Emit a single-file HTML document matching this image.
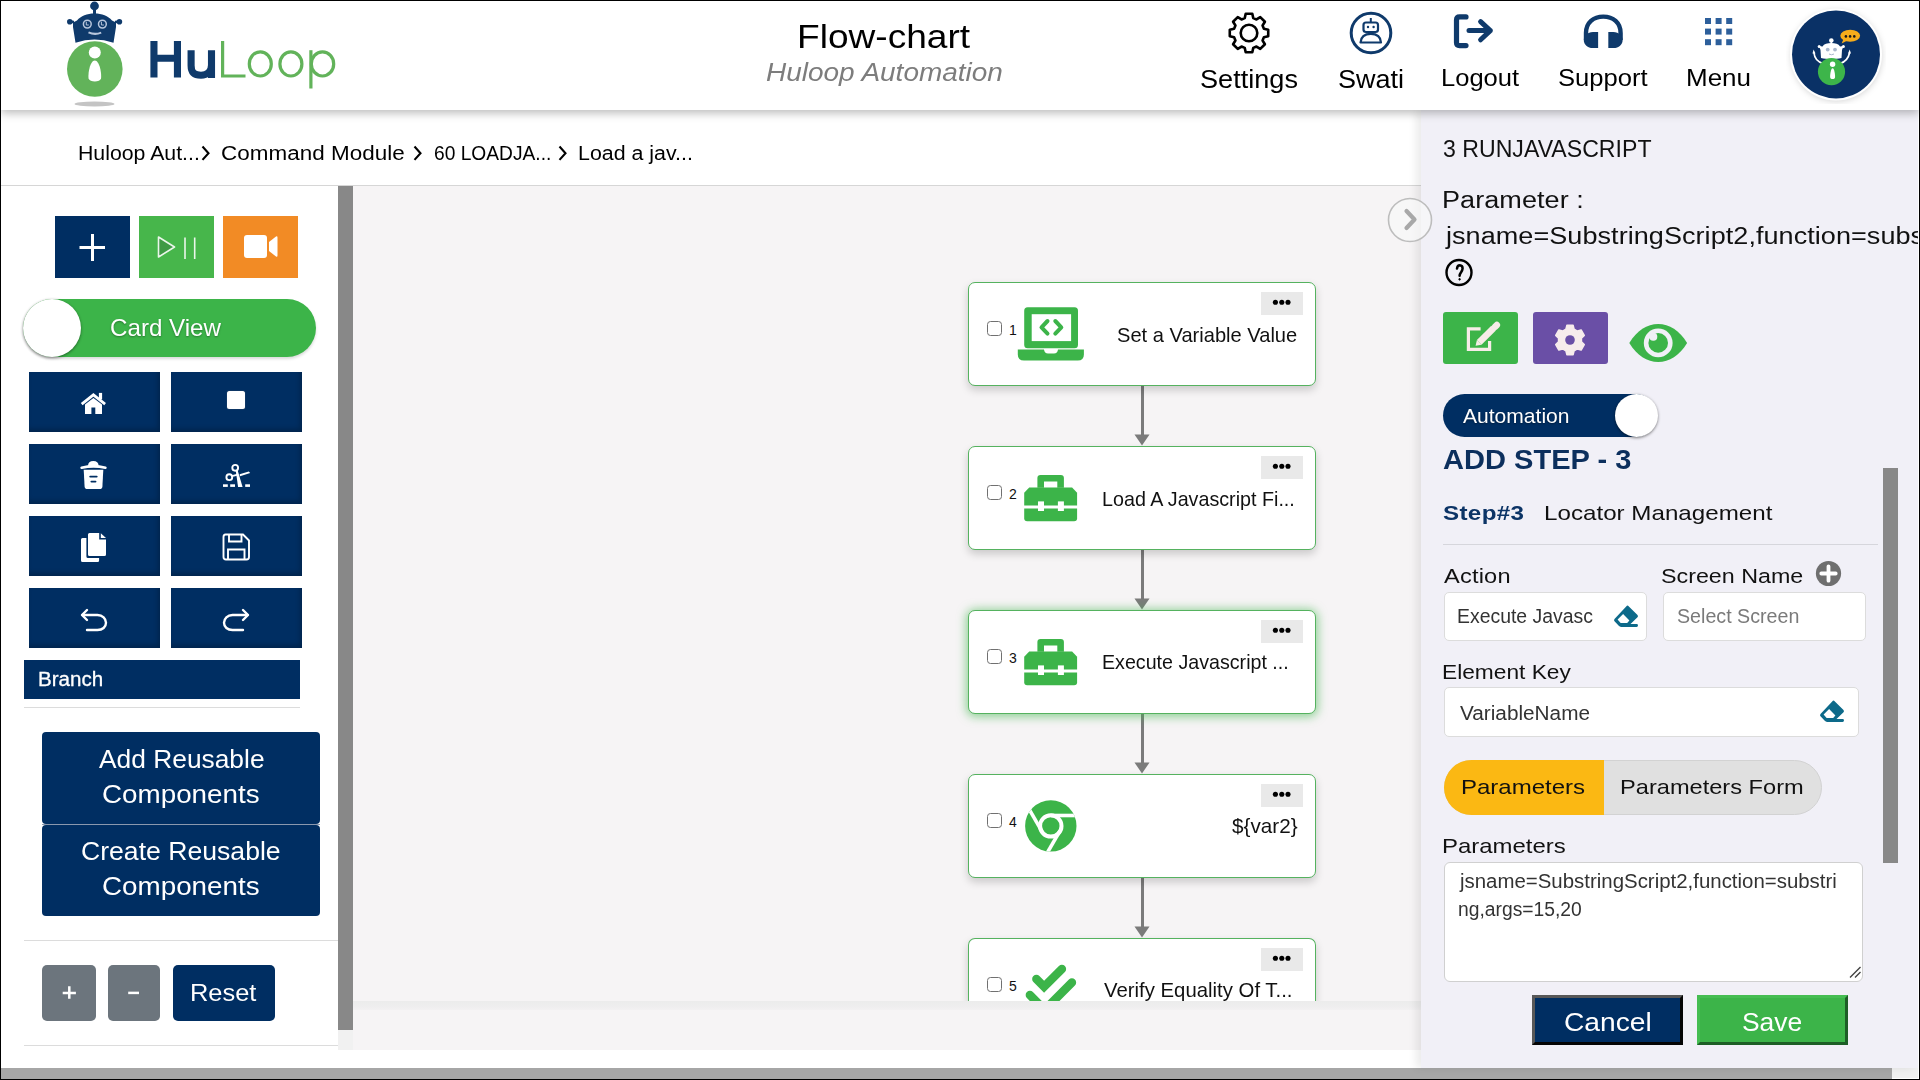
<!DOCTYPE html><html><head><meta charset="utf-8"><style>
html,body{margin:0;padding:0;}
body{width:1920px;height:1080px;overflow:hidden;background:#000;position:relative;font-family:"Liberation Sans",sans-serif;}
.t{position:absolute;line-height:1;white-space:nowrap;}
svg{display:block;}
</style></head><body>
<div style="position:absolute;left:1px;top:1px;width:1918px;height:1078px;background:#fff;"></div>
<div style="position:absolute;left:353px;top:186px;width:1068px;height:815px;background:#f6f4f5;"></div>
<div style="position:absolute;left:353px;top:1001px;width:1068px;height:10px;background:linear-gradient(#ececec, #efeeef 60%, #f4f2f3);"></div>
<div style="position:absolute;left:353px;top:1010px;width:1068px;height:40px;background:#f6f4f5;"></div>
<div style="position:absolute;left:338px;top:186px;width:15px;height:844px;background:#888;"></div>
<div style="position:absolute;left:338px;top:1030px;width:15px;height:20px;background:#f1f1f1;"></div>
<div style="position:absolute;left:1px;top:1068px;width:1891px;height:11px;background:#a6a6a6;"></div>
<div style="position:absolute;left:1892px;top:1068px;width:26px;height:10px;background:#f0f0f0;"></div>
<div style="position:absolute;left:1px;top:185px;width:1420px;height:1px;background:#d6d6d6;"></div>
<div style="position:absolute;left:1px;top:1px;width:1918px;height:109px;background:#fff;box-shadow:0 3px 9px rgba(0,0,0,0.28);z-index:5;"></div>
<div style="position:absolute;left:1421px;top:110px;width:497px;height:958px;background:#f1f0f7;box-shadow:-5px 0 8px rgba(0,0,0,0.08);z-index:2;"></div>
<svg style="position:absolute;left:60px;top:0px;z-index:7;" width="290" height="110" viewBox="0 0 290 110">
<ellipse cx="34.5" cy="104" rx="20" ry="2.4" fill="#c4c4c4"/>
<circle cx="34.8" cy="69" r="27.8" fill="#62b35a"/>
<circle cx="34.8" cy="52.5" r="6" fill="#fff"/>
<path d="M34.8 60.5 C30 60.5 27.8 74 28.6 78.5 C29.5 82.5 40.2 82.5 41 78.5 C41.8 74 39.6 60.5 34.8 60.5Z" fill="#fff"/>
<circle cx="34.5" cy="6" r="4.4" fill="#0f3a6b"/>
<rect x="33" y="8" width="3" height="7" fill="#0f3a6b"/>
<path d="M13 27 L13 22.5 L17 20.5 C21 15.5 27 13.4 34.5 13.4 C42 13.4 48 15.5 52 20.5 L56 22.5 L56 27 L53.5 42.8 Q34.5 36 15.5 42.8 Z" fill="#0f3a6b"/>
<circle cx="9.8" cy="21.8" r="2.8" fill="#0f3a6b"/><circle cx="59.4" cy="21.8" r="2.8" fill="#0f3a6b"/>
<path d="M9.8 21.8 L14 22 M59.4 21.8 L55 22" stroke="#0f3a6b" stroke-width="2.5"/>
<circle cx="27.3" cy="24.1" r="3.9" fill="none" stroke="#b8c6dc" stroke-width="1.5"/>
<circle cx="42.4" cy="24.1" r="3.9" fill="none" stroke="#b8c6dc" stroke-width="1.5"/>
<path d="M26.3 21.8 V25 H28.8 M41.4 21.8 V25 H43.9" stroke="#b8c6dc" stroke-width="1" fill="none"/>
<path d="M28.5 32.3 Q34.8 35.3 41.2 32.6" stroke="#b8c6dc" stroke-width="2" fill="none"/>
</svg>
<svg style="position:absolute;left:140px;top:30px;z-index:7;" width="210" height="70" viewBox="0 0 210 70">
<g fill="none" stroke="#0f3a6b" stroke-width="7.1">
<path d="M13.95 11 V47.6 M37.45 11 V47.6 M13.95 28.2 H37.45"/>
<path d="M51.1 20.2 V35.5 C51.1 43.5 55 45.2 61 45.2 C67 45.2 71.5 42 71.5 35 V20.2 M71.5 30 V48.1"/>
</g>
<g fill="none" stroke="#62b35a" stroke-width="3.2">
<path d="M82.6 11 V46 H105.5"/>
<ellipse cx="120.3" cy="33.9" rx="11" ry="12.1"/>
<ellipse cx="150.9" cy="33.9" rx="11" ry="12.1"/>
<ellipse cx="182.5" cy="33.9" rx="11.2" ry="12.1"/>
<path d="M170.9 20.2 V58.5"/>
</g>
</svg>
<div class="t" style="left:797.2284768211921px;top:20.00px;font-size:33px;color:#000;font-weight:normal;letter-spacing:0.0px;font-style:normal;transform:scaleX(1.1238);transform-origin:0 0;z-index:7;">Flow-chart</div>
<div class="t" style="left:765.8809523809524px;top:60.00px;font-size:25px;color:#7d7d7d;font-weight:normal;letter-spacing:0.0px;font-style:italic;transform:scaleX(1.1190);transform-origin:0 0;z-index:7;">Huloop Automation</div>
<svg style="position:absolute;left:1228px;top:12px;z-index:7;" width="42" height="42" viewBox="0 0 42 42"><path d="M16.72 6.10 L17.70 1.78 L24.30 1.78 L25.28 6.10 L28.50 7.44 L32.26 5.08 L36.92 9.74 L34.56 13.50 L35.90 16.72 L40.22 17.70 L40.22 24.30 L35.90 25.28 L34.56 28.50 L36.92 32.26 L32.26 36.92 L28.50 34.56 L25.28 35.90 L24.30 40.22 L17.70 40.22 L16.72 35.90 L13.50 34.56 L9.74 36.92 L5.08 32.26 L7.44 28.50 L6.10 25.28 L1.78 24.30 L1.78 17.70 L6.10 16.72 L7.44 13.50 L5.08 9.74 L9.74 5.08 L13.50 7.44Z" fill="none" stroke="#000" stroke-width="2.6" stroke-linejoin="round"/><circle cx="21" cy="21" r="8.3" fill="none" stroke="#000" stroke-width="2.6"/></svg>
<div class="t" style="left:1200.4157303370787px;top:67.00px;font-size:25px;color:#000;font-weight:normal;letter-spacing:-0.0px;font-style:normal;transform:scaleX(1.0843);transform-origin:0 0;z-index:7;">Settings</div>
<svg style="position:absolute;left:1349px;top:11px;z-index:7;" width="44" height="44" viewBox="0 0 44 44"><circle cx="22" cy="22" r="19.8" fill="none" stroke="#0f3a6b" stroke-width="3"/>
<rect x="14.5" y="11.5" width="14.5" height="9.5" rx="2.5" fill="none" stroke="#0f3a6b" stroke-width="2.2"/>
<path d="M21.8 7 V11" stroke="#0f3a6b" stroke-width="2"/>
<circle cx="19" cy="16" r="1.2" fill="#0f3a6b"/><circle cx="24.6" cy="16" r="1.2" fill="#0f3a6b"/>
<path d="M11.5 31.5 C12 24.5 17 22.8 21.8 22.8 C26.6 22.8 31.6 24.5 32 31.5 Z" fill="none" stroke="#0f3a6b" stroke-width="2.2" stroke-linejoin="round"/>
</svg>
<div class="t" style="left:1337.6694915254238px;top:67.00px;font-size:25px;color:#000;font-weight:normal;letter-spacing:0.0px;font-style:normal;transform:scaleX(1.0805);transform-origin:0 0;z-index:7;">Swati</div>
<svg style="position:absolute;left:1452px;top:13px;z-index:7;" width="44" height="37" viewBox="0 0 44 37"><path d="M14 3.9 H7.6 Q4.5 3.9 4.5 7 V29.5 Q4.5 32.6 7.6 32.6 H14" fill="none" stroke="#0f3a6b" stroke-width="5.2" stroke-linecap="round" stroke-linejoin="round"/>
<path d="M17 17.6 H38.3 M28.6 8.6 L38.3 17.6 L28.6 26.8" fill="none" stroke="#0f3a6b" stroke-width="5" stroke-linecap="round" stroke-linejoin="round"/></svg>
<div class="t" style="left:1441.2794117647059px;top:67.00px;font-size:23px;color:#000;font-weight:normal;letter-spacing:0.0px;font-style:normal;transform:scaleX(1.1103);transform-origin:0 0;z-index:7;">Logout</div>
<svg style="position:absolute;left:1582px;top:13px;z-index:7;" width="42" height="37" viewBox="0 0 42 37"><path d="M4 27 V20 C4 9.5 11.5 3.6 21.3 3.6 C31.1 3.6 38.6 9.5 38.6 20 V27" fill="none" stroke="#0f3a6b" stroke-width="4.4"/>
<path d="M16.1 18.9 H11 C5.5 18.9 1.8 22.5 1.8 27 C1.8 31.5 5.5 35.1 11 35.1 H16.1Z" fill="#0f3a6b"/>
<path d="M26.3 18.9 H31.4 C36.9 18.9 40.6 22.5 40.6 27 C40.6 31.5 36.9 35.1 31.4 35.1 H26.3Z" fill="#0f3a6b"/></svg>
<div class="t" style="left:1557.8875px;top:67.00px;font-size:23px;color:#000;font-weight:normal;letter-spacing:0.0px;font-style:normal;transform:scaleX(1.1125);transform-origin:0 0;z-index:7;">Support</div>
<svg style="position:absolute;left:1705px;top:18px;z-index:7;" width="28" height="28" viewBox="0 0 28 28"><rect x="0.0" y="0.0" width="6" height="6" fill="#2d5f9b"/><rect x="10.6" y="0.0" width="6" height="6" fill="#2d5f9b"/><rect x="21.2" y="0.0" width="6" height="6" fill="#2d5f9b"/><rect x="0.0" y="10.6" width="6" height="6" fill="#2d5f9b"/><rect x="10.6" y="10.6" width="6" height="6" fill="#2d5f9b"/><rect x="21.2" y="10.6" width="6" height="6" fill="#2d5f9b"/><rect x="0.0" y="21.2" width="6" height="6" fill="#2d5f9b"/><rect x="10.6" y="21.2" width="6" height="6" fill="#2d5f9b"/><rect x="21.2" y="21.2" width="6" height="6" fill="#2d5f9b"/></svg>
<div class="t" style="left:1686.2407407407406px;top:67.00px;font-size:23px;color:#000;font-weight:normal;letter-spacing:0.0px;font-style:normal;transform:scaleX(1.1296);transform-origin:0 0;z-index:7;">Menu</div>
<svg style="position:absolute;left:1786px;top:4px;z-index:7;" width="100" height="100" viewBox="0 0 100 100">
<defs><filter id="sh" x="-30%" y="-30%" width="160%" height="160%"><feGaussianBlur stdDeviation="3"/></filter></defs>
<circle cx="50.5" cy="52" r="45.5" fill="rgba(0,0,0,0.16)" filter="url(#sh)"/>
<circle cx="50" cy="50.4" r="46" fill="#fff"/>
<circle cx="50" cy="50.4" r="44" fill="#0a3166"/>
<ellipse cx="64.2" cy="31.75" rx="9.9" ry="5.9" fill="#f6ad1b"/>
<path d="M57.5 35 L55.6 39.6 L61.5 36.5Z" fill="#f6ad1b"/>
<circle cx="59.9" cy="32.4" r="1.3" fill="#1a1a1a"/><circle cx="64.1" cy="32.4" r="1.3" fill="#1a1a1a"/><circle cx="68.3" cy="32.4" r="1.3" fill="#1a1a1a"/>
<circle cx="45.3" cy="36.5" r="2.3" fill="#fff"/><rect x="44.6" y="37" width="1.4" height="3" fill="#fff"/>
<path d="M36.5 42.5 C38 39.8 41.5 39 45.3 39 C49.1 39 52.6 39.8 54.1 42.5 L57.5 42 L56 46 L55.5 54 C50 55.5 40.5 55.5 35 54 L34.5 46 L33 42Z" fill="#fff"/>
<circle cx="33.2" cy="42.6" r="1.5" fill="#fff"/><circle cx="57.4" cy="42.6" r="1.5" fill="#fff"/>
<circle cx="41.7" cy="45.6" r="1.9" fill="#a9b7cc"/><circle cx="49" cy="45.6" r="1.9" fill="#a9b7cc"/>
<path d="M43 50 Q45.5 51.5 48 50" stroke="#a9b7cc" stroke-width="1" fill="none"/>
<path d="M37 59.5 C32 58 28.5 54 28 49 M54 59.5 C59 58 62.5 54 63.5 49" fill="none" stroke="#fff" stroke-width="1.7"/>
<path d="M26.5 49.5 L27.6 45.5 L29.5 49.5Z M62 49.5 L63.7 45.5 L65 49.5Z" fill="#fff"/>
<circle cx="45.5" cy="67.7" r="13.6" fill="#3db54a"/>
<circle cx="46.6" cy="60.3" r="2.7" fill="#fff"/>
<path d="M46.6 64.2 C44.8 64.2 43.9 71 44.2 73.5 C44.5 75.6 48.7 75.6 49 73.5 C49.3 71 48.4 64.2 46.6 64.2Z" fill="#fff"/>
</svg>
<div class="t" style="left:78.41851851851851px;top:144.00px;font-size:19.5px;color:#000;font-weight:normal;letter-spacing:-0.0px;font-style:normal;transform:scaleX(1.0907);transform-origin:0 0;">Huloop Aut...</div>
<svg style="position:absolute;left:201px;top:145px;" width="10" height="17" viewBox="0 0 10 17"><path d="M1.5 1.5 L7.5 8.2 L1.5 14.9" fill="none" stroke="#000" stroke-width="2.1" stroke-linejoin="miter"/></svg>
<div class="t" style="left:221.45px;top:144.00px;font-size:19.5px;color:#000;font-weight:normal;letter-spacing:0.027px;font-style:normal;transform:scaleX(1.1500);transform-origin:0 0;">Command Module</div>
<svg style="position:absolute;left:412.5px;top:145px;" width="10" height="17" viewBox="0 0 10 17"><path d="M1.5 1.5 L7.5 8.2 L1.5 14.9" fill="none" stroke="#000" stroke-width="2.1" stroke-linejoin="miter"/></svg>
<div class="t" style="left:433.5162393162393px;top:144.00px;font-size:19.5px;color:#000;font-weight:normal;letter-spacing:0.0px;font-style:normal;transform:scaleX(0.9838);transform-origin:0 0;">60 LOADJA...</div>
<svg style="position:absolute;left:557.5px;top:145px;" width="10" height="17" viewBox="0 0 10 17"><path d="M1.5 1.5 L7.5 8.2 L1.5 14.9" fill="none" stroke="#000" stroke-width="2.1" stroke-linejoin="miter"/></svg>
<div class="t" style="left:577.5079207920793px;top:144.00px;font-size:19.5px;color:#000;font-weight:normal;letter-spacing:0.0px;font-style:normal;transform:scaleX(1.0960);transform-origin:0 0;">Load a jav...</div>
<div style="position:absolute;left:55px;top:216px;width:75px;height:62px;background:#002e62;"></div>
<svg style="position:absolute;left:55px;top:216px;" width="75" height="62" viewBox="0 0 75 62"><path d="M37.5 18 V45 M24.5 31.5 H50" stroke="#fff" stroke-width="3"/></svg>
<div style="position:absolute;left:139px;top:216px;width:75px;height:62px;background:#47b64b;"></div>
<svg style="position:absolute;left:139px;top:216px;" width="75" height="62" viewBox="0 0 75 62"><path d="M19.5 21 L35.5 31 L19.5 41Z" fill="#3f9a45" stroke="#eaf6ea" stroke-width="1.6" stroke-linejoin="round"/><path d="M46 21.5 V43 M55.7 21.5 V43" stroke="#eaf6ea" stroke-width="1.6"/></svg>
<div style="position:absolute;left:223px;top:216px;width:75px;height:62px;background:#f28b25;"></div>
<svg style="position:absolute;left:223px;top:216px;" width="75" height="62" viewBox="0 0 75 62"><rect x="21" y="19" width="23" height="23" rx="3" fill="#fff"/><path d="M46 26 L53 20.5 Q54.5 19.8 54.5 21.5 V39.5 Q54.5 41.2 53 40.5 L46 35Z" fill="#fff"/></svg>
<div style="position:absolute;left:22.5px;top:299px;width:293px;height:58px;background:#3cb449;border-radius:29px;box-shadow:0 2px 3px rgba(0,0,0,0.15);"></div>
<div style="position:absolute;left:22.5px;top:299px;width:58px;height:58px;background:#fff;border-radius:50%;box-shadow:0 1px 3px rgba(0,0,0,0.45);"></div>
<div class="t" style="left:110.19357798165137px;top:316.00px;font-size:24px;color:#fff;font-weight:normal;letter-spacing:0.0px;font-style:normal;transform:scaleX(1.0064);transform-origin:0 0;text-shadow:0 1px 2px rgba(0,0,0,0.35);">Card View</div>
<div style="position:absolute;left:29px;top:372px;width:131px;height:60px;background:#002e62;box-shadow:inset -2px -3px 5px rgba(0,0,0,0.22);"></div>
<div style="position:absolute;left:171px;top:372px;width:131px;height:60px;background:#002e62;box-shadow:inset -2px -3px 5px rgba(0,0,0,0.22);"></div>
<div style="position:absolute;left:29px;top:444px;width:131px;height:60px;background:#002e62;box-shadow:inset -2px -3px 5px rgba(0,0,0,0.22);"></div>
<div style="position:absolute;left:171px;top:444px;width:131px;height:60px;background:#002e62;box-shadow:inset -2px -3px 5px rgba(0,0,0,0.22);"></div>
<div style="position:absolute;left:29px;top:516px;width:131px;height:60px;background:#002e62;box-shadow:inset -2px -3px 5px rgba(0,0,0,0.22);"></div>
<div style="position:absolute;left:171px;top:516px;width:131px;height:60px;background:#002e62;box-shadow:inset -2px -3px 5px rgba(0,0,0,0.22);"></div>
<div style="position:absolute;left:29px;top:588px;width:131px;height:60px;background:#002e62;box-shadow:inset -2px -3px 5px rgba(0,0,0,0.22);"></div>
<div style="position:absolute;left:171px;top:588px;width:131px;height:60px;background:#002e62;box-shadow:inset -2px -3px 5px rgba(0,0,0,0.22);"></div>
<svg style="position:absolute;left:80px;top:391px;" width="27" height="25" viewBox="0 0 27 25"><path d="M1.7 13.1 L13.4 3.9 L25.1 13.1" fill="none" stroke="#fff" stroke-width="2.8" stroke-linejoin="miter" stroke-miterlimit="10"/><path d="M5 13.6 L13.4 7 L22 13.6 V23 H15.3 V16.4 H11.4 V23 H5Z" fill="#fff"/><rect x="18.9" y="1.9" width="3.2" height="6.5" fill="#fff"/></svg>
<div style="position:absolute;left:227px;top:391px;width:18px;height:17.5px;background:#fff;border-radius:2.5px;box-shadow:0 0 1px #888;"></div>
<svg style="position:absolute;left:80px;top:460px;" width="27" height="30" viewBox="0 0 27 30"><path d="M7.9 6 Q8.2 0.9 13.3 0.9 Q18.4 0.9 18.7 6Z" fill="#fff"/><path d="M1.6 7.8 Q13.5 5 25.4 7.8" fill="none" stroke="#fff" stroke-width="2.6" stroke-linecap="round"/><path d="M3.7 9.8 H23.3 L22.4 26.4 Q22.2 29.1 19.5 29.1 H7.5 Q4.8 29.1 4.6 26.4Z" fill="#fff"/><path d="M10.2 16.6 H16.7 M11.4 21.6 H15.5" stroke="#002e62" stroke-width="1.9" stroke-linecap="round"/></svg>
<svg style="position:absolute;left:222px;top:463px;" width="30" height="26" viewBox="0 0 30 26"><circle cx="13.2" cy="4.8" r="2.9" fill="none" stroke="#fff" stroke-width="1.9"/><circle cx="7.3" cy="14.2" r="2.9" fill="none" stroke="#fff" stroke-width="1.9"/><path d="M13.7 7.4 L15.7 7.4 L20.6 23.9 L16.1 23.9Z" fill="#fff"/><path d="M9.9 13.2 L15.8 11.6" stroke="#fff" stroke-width="1.8"/><path d="M17.6 11.2 L26.8 8.5 L28.2 9.9 L18 13.3Z" fill="#fff"/><rect x="1" y="21.3" width="4.8" height="2.6" fill="#fff"/><rect x="8.2" y="21.3" width="4.8" height="2.6" fill="#fff"/><rect x="23.2" y="21.3" width="4.8" height="2.6" fill="#fff"/></svg>
<svg style="position:absolute;left:80px;top:532px;" width="27" height="31" viewBox="0 0 27 31"><path d="M8 2.6 Q8 1.1 9.5 1.1 H19.2 V7.5 H26 V22.5 Q26 24 24.5 24 H9.5 Q8 24 8 22.5Z" fill="#fff"/><path d="M20.8 1.2 L26 6 H20.8Z" fill="#fff"/><path d="M1 7.6 Q1 6.1 2.5 6.1 H6.4 V24.4 Q6.4 25.9 7.9 25.9 H19.1 V28.4 Q19.1 29.9 17.6 29.9 H2.5 Q1 29.9 1 28.4Z" fill="#fff"/></svg>
<svg style="position:absolute;left:222px;top:533px;" width="29" height="28" viewBox="0 0 29 28"><path d="M3.5 1.5 H21 L27 7.5 V24 Q27 26.5 24.5 26.5 H4 Q1.5 26.5 1.5 24 V4 Q1.5 1.5 3.5 1.5Z" fill="none" stroke="#fff" stroke-width="1.9"/><path d="M7 1.8 V8.5 H19.5 V1.8" fill="none" stroke="#fff" stroke-width="1.9"/><path d="M6 26 V16.5 H22.5 V26" fill="none" stroke="#fff" stroke-width="1.9"/></svg>
<svg style="position:absolute;left:80px;top:607px;" width="28" height="25" viewBox="0 0 28 25"><path d="M7 3 L2 8 L7 13" fill="none" stroke="#fff" stroke-width="2.4" stroke-linecap="round" stroke-linejoin="round"/><path d="M2.5 8 H17.5 C22.5 8 26 11.5 26 15.8 C26 20 22.5 23 17.5 23 H7" fill="none" stroke="#fff" stroke-width="2.4" stroke-linecap="round"/></svg>
<svg style="position:absolute;left:222px;top:607px;" width="28" height="25" viewBox="0 0 28 25"><path d="M21 3 L26 8 L21 13" fill="none" stroke="#fff" stroke-width="2.4" stroke-linecap="round" stroke-linejoin="round"/><path d="M25.5 8 H10.5 C5.5 8 2 11.5 2 15.8 C2 20 5.5 23 10.5 23 H21" fill="none" stroke="#fff" stroke-width="2.4" stroke-linecap="round"/></svg>
<div style="position:absolute;left:24px;top:660px;width:276px;height:39px;background:#002e62;"></div>
<div class="t" style="left:37.791525423728814px;top:670.00px;font-size:19.5px;color:#fff;font-weight:normal;letter-spacing:0.0px;font-style:normal;transform:scaleX(1.0542);transform-origin:0 0;-webkit-text-stroke:0.3px #fff;">Branch</div>
<div style="position:absolute;left:24px;top:707px;width:276px;height:1px;background:#dcdcdc;"></div>
<div style="position:absolute;left:42px;top:732px;width:278px;height:91.5px;background:#002e62;border-radius:4px;"></div>
<div style="position:absolute;left:42px;top:823.5px;width:278px;height:1.5px;background:#8a98ae;"></div>
<div style="position:absolute;left:42px;top:825px;width:278px;height:90.5px;background:#002e62;border-radius:4px;"></div>
<div class="t" style="left:99.0px;top:747.00px;font-size:25.5px;color:#fff;font-weight:normal;letter-spacing:0.0px;font-style:normal;transform:scaleX(1.0333);transform-origin:0 0;">Add Reusable</div>
<div class="t" style="left:101.70979020979021px;top:782.00px;font-size:25.5px;color:#fff;font-weight:normal;letter-spacing:0.0px;font-style:normal;transform:scaleX(1.0902);transform-origin:0 0;">Components</div>
<div class="t" style="left:80.85684210526317px;top:839.00px;font-size:25.5px;color:#fff;font-weight:normal;letter-spacing:0.0px;font-style:normal;transform:scaleX(1.0432);transform-origin:0 0;">Create Reusable</div>
<div class="t" style="left:101.70979020979021px;top:874.00px;font-size:25.5px;color:#fff;font-weight:normal;letter-spacing:0.0px;font-style:normal;transform:scaleX(1.0902);transform-origin:0 0;">Components</div>
<div style="position:absolute;left:24px;top:940px;width:314px;height:1px;background:#dcdcdc;"></div>
<div style="position:absolute;left:42px;top:965px;width:54px;height:56px;background:#6c757d;border-radius:5px;"></div>
<div style="position:absolute;left:108px;top:965px;width:52px;height:56px;background:#6c757d;border-radius:5px;"></div>
<div style="position:absolute;left:172.5px;top:965px;width:102px;height:56px;background:#002e62;border-radius:5px;"></div>
<svg style="position:absolute;left:42px;top:965px;" width="54" height="56" viewBox="0 0 54 56"><path d="M27.3 21.3 V33.8 M20.7 27.9 H33.9" stroke="#fff" stroke-width="2.5"/></svg>
<svg style="position:absolute;left:108px;top:965px;" width="52" height="56" viewBox="0 0 52 56"><path d="M20.2 27.9 H31" stroke="#fff" stroke-width="2.5"/></svg>
<div class="t" style="left:189.6258064516129px;top:981.00px;font-size:24.5px;color:#fff;font-weight:normal;letter-spacing:0.0px;font-style:normal;transform:scaleX(1.0371);transform-origin:0 0;">Reset</div>
<div style="position:absolute;left:24px;top:1045px;width:314px;height:1px;background:#dcdcdc;"></div>
<div style="position:absolute;left:1140.5px;top:386px;width:3px;height:50px;background:#7b7b7b;"></div>
<svg style="position:absolute;left:1134px;top:434px;" width="16" height="12" viewBox="0 0 16 12"><path d="M0.5 0.5 H15.5 L8 11.5Z" fill="#7b7b7b"/></svg>
<div style="position:absolute;left:1140.5px;top:550px;width:3px;height:50px;background:#7b7b7b;"></div>
<svg style="position:absolute;left:1134px;top:598px;" width="16" height="12" viewBox="0 0 16 12"><path d="M0.5 0.5 H15.5 L8 11.5Z" fill="#7b7b7b"/></svg>
<div style="position:absolute;left:1140.5px;top:714px;width:3px;height:50px;background:#7b7b7b;"></div>
<svg style="position:absolute;left:1134px;top:762px;" width="16" height="12" viewBox="0 0 16 12"><path d="M0.5 0.5 H15.5 L8 11.5Z" fill="#7b7b7b"/></svg>
<div style="position:absolute;left:1140.5px;top:878px;width:3px;height:50px;background:#7b7b7b;"></div>
<svg style="position:absolute;left:1134px;top:926px;" width="16" height="12" viewBox="0 0 16 12"><path d="M0.5 0.5 H15.5 L8 11.5Z" fill="#7b7b7b"/></svg>
<div style="position:absolute;left:968px;top:282px;width:348px;height:104px;background:#fff;border:1px solid #55b25f;box-sizing:border-box;border-radius:7px;box-shadow:0 4px 8px rgba(0,0,0,0.18);"></div>
<div style="position:absolute;left:987px;top:321px;width:15px;height:15px;border:1.5px solid #707070;border-radius:3.5px;box-sizing:border-box;background:#fff;"></div>
<div class="t" style="left:1009px;top:323.00px;font-size:14px;color:#111;font-weight:normal;letter-spacing:0px;font-style:normal;">1</div>
<div style="position:absolute;left:1261px;top:292px;width:42px;height:23px;background:#e9e9e9;"></div>
<svg style="position:absolute;left:1272px;top:299px;" width="20" height="7" viewBox="0 0 20 7"><circle cx="3.4" cy="3.2" r="2.55" fill="#000"/><circle cx="9.8" cy="3.2" r="2.55" fill="#000"/><circle cx="16" cy="3.2" r="2.55" fill="#000"/></svg>
<svg style="position:absolute;left:1017px;top:305px" width="68" height="57" viewBox="0 0 68 57"><rect x="7.2" y="2.2" width="53.8" height="41" rx="3.5" fill="#3cb449"/><rect x="14.7" y="9.2" width="39.4" height="26.9" fill="#fff"/><path d="M30.5 16 L24.5 22.3 L30.5 28.6 M38.3 16 L44.3 22.3 L38.3 28.6" fill="none" stroke="#3cb449" stroke-width="4" stroke-linecap="round" stroke-linejoin="round"/><path d="M0.8 44.4 H27 Q27.5 48.5 31 48.5 H37 Q40.5 48.5 41 44.4 H66.9 V49.5 Q66.9 55.6 60.8 55.6 H7 Q0.8 55.6 0.8 49.5Z" fill="#3cb449"/></svg>
<div class="t" style="left:1116.5433155080214px;top:324.00px;font-size:21px;color:#111;font-weight:normal;letter-spacing:0.0px;font-style:normal;transform:scaleX(0.9567);transform-origin:0 0;">Set a Variable Value</div>
<div style="position:absolute;left:968px;top:446px;width:348px;height:104px;background:#fff;border:1px solid #55b25f;box-sizing:border-box;border-radius:7px;box-shadow:0 4px 8px rgba(0,0,0,0.18);"></div>
<div style="position:absolute;left:987px;top:485px;width:15px;height:15px;border:1.5px solid #707070;border-radius:3.5px;box-sizing:border-box;background:#fff;"></div>
<div class="t" style="left:1009px;top:487.00px;font-size:14px;color:#111;font-weight:normal;letter-spacing:0px;font-style:normal;">2</div>
<div style="position:absolute;left:1261px;top:456px;width:42px;height:23px;background:#e9e9e9;"></div>
<svg style="position:absolute;left:1272px;top:463px;" width="20" height="7" viewBox="0 0 20 7"><circle cx="3.4" cy="3.2" r="2.55" fill="#000"/><circle cx="9.8" cy="3.2" r="2.55" fill="#000"/><circle cx="16" cy="3.2" r="2.55" fill="#000"/></svg>
<svg style="position:absolute;left:1022px;top:474px" width="58" height="50" viewBox="0 0 58 50"><path d="M15.4 13.8 V4 Q15.4 0.9 18.5 0.9 H38.8 Q41.9 0.9 41.9 4 V13.8 H35.3 V7.5 H22 V13.8Z" fill="#3cb449"/><path d="M2.2 18.8 L7.2 13.5 H50.1 L55.1 18.8 V31.6 H2.2Z" fill="#3cb449"/><path d="M2.2 34.4 H55.1 V44.2 Q55.1 47.2 52.1 47.2 H5.2 Q2.2 47.2 2.2 44.2Z" fill="#3cb449"/><rect x="16" y="27.4" width="6" height="9.6" fill="#fff"/><rect x="35.9" y="27.4" width="6" height="9.6" fill="#fff"/></svg>
<div class="t" style="left:1101.6227722772278px;top:488.00px;font-size:21px;color:#111;font-weight:normal;letter-spacing:0.0px;font-style:normal;transform:scaleX(0.9386);transform-origin:0 0;">Load A Javascript Fi...</div>
<div style="position:absolute;left:968px;top:610px;width:348px;height:104px;background:#fff;border:1px solid #55b25f;box-sizing:border-box;border-radius:7px;box-shadow:0 1px 10px 2px rgba(60,180,73,0.55);"></div>
<div style="position:absolute;left:987px;top:649px;width:15px;height:15px;border:1.5px solid #707070;border-radius:3.5px;box-sizing:border-box;background:#fff;"></div>
<div class="t" style="left:1009px;top:651.00px;font-size:14px;color:#111;font-weight:normal;letter-spacing:0px;font-style:normal;">3</div>
<div style="position:absolute;left:1261px;top:620px;width:42px;height:23px;background:#e9e9e9;"></div>
<svg style="position:absolute;left:1272px;top:627px;" width="20" height="7" viewBox="0 0 20 7"><circle cx="3.4" cy="3.2" r="2.55" fill="#000"/><circle cx="9.8" cy="3.2" r="2.55" fill="#000"/><circle cx="16" cy="3.2" r="2.55" fill="#000"/></svg>
<svg style="position:absolute;left:1022px;top:638px" width="58" height="50" viewBox="0 0 58 50"><path d="M15.4 13.8 V4 Q15.4 0.9 18.5 0.9 H38.8 Q41.9 0.9 41.9 4 V13.8 H35.3 V7.5 H22 V13.8Z" fill="#3cb449"/><path d="M2.2 18.8 L7.2 13.5 H50.1 L55.1 18.8 V31.6 H2.2Z" fill="#3cb449"/><path d="M2.2 34.4 H55.1 V44.2 Q55.1 47.2 52.1 47.2 H5.2 Q2.2 47.2 2.2 44.2Z" fill="#3cb449"/><rect x="16" y="27.4" width="6" height="9.6" fill="#fff"/><rect x="35.9" y="27.4" width="6" height="9.6" fill="#fff"/></svg>
<div class="t" style="left:1101.6285714285714px;top:651.00px;font-size:21px;color:#111;font-weight:normal;letter-spacing:0.0px;font-style:normal;transform:scaleX(0.9357);transform-origin:0 0;">Execute Javascript ...</div>
<div style="position:absolute;left:968px;top:774px;width:348px;height:104px;background:#fff;border:1px solid #55b25f;box-sizing:border-box;border-radius:7px;box-shadow:0 4px 8px rgba(0,0,0,0.18);"></div>
<div style="position:absolute;left:987px;top:813px;width:15px;height:15px;border:1.5px solid #707070;border-radius:3.5px;box-sizing:border-box;background:#fff;"></div>
<div class="t" style="left:1009px;top:815.00px;font-size:14px;color:#111;font-weight:normal;letter-spacing:0px;font-style:normal;">4</div>
<div style="position:absolute;left:1261px;top:784px;width:42px;height:23px;background:#e9e9e9;"></div>
<svg style="position:absolute;left:1272px;top:791px;" width="20" height="7" viewBox="0 0 20 7"><circle cx="3.4" cy="3.2" r="2.55" fill="#000"/><circle cx="9.8" cy="3.2" r="2.55" fill="#000"/><circle cx="16" cy="3.2" r="2.55" fill="#000"/></svg>
<svg style="position:absolute;left:1024px;top:799px" width="54" height="54" viewBox="-26.8 -26.9 54 54"><defs><clipPath id="cc774"><circle cx="0" cy="0" r="25.7"/></clipPath></defs><circle cx="0" cy="0" r="25.7" fill="#3cb449"/><g clip-path="url(#cc774)"><rect x="0" y="-12.2" width="30" height="3.6" fill="#fff" transform="rotate(0)"/><rect x="0" y="-12.2" width="30" height="3.6" fill="#fff" transform="rotate(120)"/><rect x="0" y="-12.2" width="30" height="3.6" fill="#fff" transform="rotate(240)"/></g><circle cx="0" cy="0" r="10.7" fill="none" stroke="#fff" stroke-width="4"/></svg>
<div class="t" style="left:1231.7px;top:815.00px;font-size:21px;color:#111;font-weight:normal;letter-spacing:0.0px;font-style:normal;transform:scaleX(0.9848);transform-origin:0 0;">${var2}</div>
<div style="position:absolute;left:0;top:0;width:1920px;height:1001px;overflow:hidden;">
<div style="position:absolute;left:968px;top:938px;width:348px;height:63px;background:#fff;border:1px solid #55b25f;box-sizing:border-box;border-radius:7px 7px 0 0;box-shadow:0 4px 8px rgba(0,0,0,0.18);border-bottom:none;"></div>
<div style="position:absolute;left:987px;top:977px;width:15px;height:15px;border:1.5px solid #707070;border-radius:3.5px;box-sizing:border-box;background:#fff;"></div>
<div class="t" style="left:1009px;top:979.00px;font-size:14px;color:#111;font-weight:normal;letter-spacing:0px;font-style:normal;">5</div>
<div style="position:absolute;left:1261px;top:948px;width:42px;height:23px;background:#e9e9e9;"></div>
<svg style="position:absolute;left:1272px;top:955px;" width="20" height="7" viewBox="0 0 20 7"><circle cx="3.4" cy="3.2" r="2.55" fill="#000"/><circle cx="9.8" cy="3.2" r="2.55" fill="#000"/><circle cx="16" cy="3.2" r="2.55" fill="#000"/></svg>
<svg style="position:absolute;left:1022px;top:960px" width="60" height="60" viewBox="0 0 60 60"><path d="M14.4 19 L22.1 26.7 L39.9 9.1" fill="none" stroke="#3cb449" stroke-width="8.5" stroke-linecap="round" stroke-linejoin="miter"/><path d="M7.9 35.1 L22.65 49.85 L49.9 22.6" fill="none" stroke="#3cb449" stroke-width="8.5" stroke-linecap="round" stroke-linejoin="miter"/></svg>
<div class="t" style="left:1103.5px;top:979.00px;font-size:21px;color:#111;font-weight:normal;letter-spacing:0.0px;font-style:normal;transform:scaleX(0.9689);transform-origin:0 0;">Verify Equality Of T...</div>
</div>
<svg style="position:absolute;left:1387px;top:197px;z-index:3;" width="46" height="46" viewBox="0 0 46 46"><circle cx="23" cy="23" r="21.5" fill="rgba(248,248,248,0.7)" stroke="#bdbdbd" stroke-width="1.6"/><path d="M19.5 14 L27.5 22.5 L19.5 31" fill="none" stroke="#a8a8a8" stroke-width="4.2" stroke-linecap="round" stroke-linejoin="round"/></svg>
<div class="t" style="left:1443.4563636363637px;top:137.00px;font-size:24.5px;color:#111;font-weight:normal;letter-spacing:0.0px;font-style:normal;transform:scaleX(0.9436);transform-origin:0 0;z-index:3;">3 RUNJAVASCRIPT</div>
<div class="t" style="left:1442.1000000000001px;top:189.00px;font-size:23.5px;color:#111;font-weight:normal;letter-spacing:0.057px;font-style:normal;transform:scaleX(1.1500);transform-origin:0 0;z-index:3;">Parameter :</div>
<div style="position:absolute;left:1421px;top:110px;width:497px;height:958px;overflow:hidden;z-index:3;">
<div class="t" style="left:24.55000000000009px;top:115.00px;font-size:23.5px;color:#111;font-weight:normal;letter-spacing:0.046px;font-style:normal;transform:scaleX(1.1500);transform-origin:0 0;">jsname=SubstringScript2,function=substring,args=15,20</div>
</div>
<svg style="position:absolute;left:1444px;top:258px;z-index:3;" width="30" height="30" viewBox="0 0 30 30"><circle cx="15" cy="14.5" r="12.5" fill="none" stroke="#000" stroke-width="2.4"/><path d="M13 10.6 Q13.4 7.3 15.8 7.3 Q18.6 7.5 18.6 10.4 Q18.5 12 17.2 14 Q15.6 16.3 15.6 17.8" fill="none" stroke="#000" stroke-width="2.5" stroke-linecap="round"/><path d="M15.6 19.8 L17 21.3 L15.6 22.8 L14.2 21.3Z" fill="#000"/></svg>
<div style="position:absolute;left:1443px;top:312px;width:75px;height:52px;background:#3cb449;border-radius:3px;z-index:3;"></div>
<svg style="position:absolute;left:1443px;top:312px;z-index:3;" width="75" height="52" viewBox="0 0 75 52"><path d="M37.6 16.9 H25.4 V37.4 H46.6 V28.9" fill="none" stroke="#f7ece8" stroke-width="3.2"/><path d="M36.2 30.3 L50.6 16.2" stroke="#f7ece8" stroke-width="6.6"/><path d="M32.6 33.8 L33.9 27.9 L38.5 32.7Z" fill="#f7ece8"/><path d="M52 14.8 L53.8 13.1" stroke="#f7ece8" stroke-width="6.6" stroke-linecap="round"/></svg>
<div style="position:absolute;left:1533px;top:312px;width:75px;height:52px;background:#6a4fa6;border-radius:3px;z-index:3;"></div>
<svg style="position:absolute;left:1533px;top:312px;z-index:3;" width="75" height="52" viewBox="0 0 75 52"><path d="M32.91 17.14 L33.87 13.33 L40.13 13.33 L41.09 17.14 L44.36 19.03 L48.14 17.96 L51.27 23.37 L48.45 26.11 L48.45 29.89 L51.27 32.63 L48.14 38.04 L44.36 36.97 L41.09 38.86 L40.13 42.67 L33.87 42.67 L32.91 38.86 L29.64 36.97 L25.86 38.04 L22.73 32.63 L25.55 29.89 L25.55 26.11 L22.73 23.37 L25.86 17.96 L29.64 19.03Z" fill="#f7ecec" stroke="#f7ecec" stroke-width="1.5" stroke-linejoin="round"/><circle cx="37" cy="28" r="4.8" fill="#6a4fa6"/></svg>
<svg style="position:absolute;left:1628px;top:322px;z-index:3;" width="60" height="42" viewBox="0 0 60 42"><path d="M1.3 20.9 C9 8.5 19 2 30.2 2 C41.4 2 51.4 8.5 59.1 20.9 C51.4 33.3 41.4 39.9 30.2 39.9 C19 39.9 9 33.3 1.3 20.9Z" fill="#3cb449"/><circle cx="30.2" cy="20.9" r="14.4" fill="#f1f0f7"/><circle cx="30.2" cy="20.9" r="9.8" fill="#3cb449"/><circle cx="25.3" cy="14.8" r="4" fill="#f1f0f7"/></svg>
<div style="position:absolute;left:1443px;top:394px;width:214px;height:43px;background:#002e62;border-radius:22px;z-index:3;"></div>
<div style="position:absolute;left:1614.5px;top:394px;width:43px;height:43px;background:#fff;border-radius:50%;box-shadow:0 1px 3px rgba(0,0,0,0.5);z-index:3;"></div>
<div class="t" style="left:1462.9px;top:405.00px;font-size:21px;color:#fff;font-weight:normal;letter-spacing:0.0px;font-style:normal;transform:scaleX(1.0029);transform-origin:0 0;z-index:3;text-shadow:0 1px 2px rgba(0,0,0,0.4);">Automation</div>
<div class="t" style="left:1443.1616666666666px;top:446.00px;font-size:28px;color:#0c2f5d;font-weight:bold;letter-spacing:0.0px;font-style:normal;transform:scaleX(1.0383);transform-origin:0 0;z-index:3;">ADD STEP - 3</div>
<div class="t" style="left:1443.05px;top:502.00px;font-size:21px;color:#0c3466;font-weight:bold;letter-spacing:0.304px;font-style:normal;transform:scaleX(1.1500);transform-origin:0 0;z-index:3;">Step#3</div>
<div class="t" style="left:1543.6000000000001px;top:502.00px;font-size:21px;color:#111;font-weight:normal;letter-spacing:0.01px;font-style:normal;transform:scaleX(1.1500);transform-origin:0 0;z-index:3;">Locator Management</div>
<div style="position:absolute;left:1443px;top:544px;width:435px;height:1px;background:#d6d6dc;z-index:3;"></div>
<div style="position:absolute;left:1883px;top:468px;width:15px;height:395px;background:#888;z-index:3;"></div>
<div class="t" style="left:1444.2px;top:566.00px;font-size:20.5px;color:#111;font-weight:normal;letter-spacing:0.174px;font-style:normal;transform:scaleX(1.1500);transform-origin:0 0;z-index:3;">Action</div>
<div class="t" style="left:1661.465322580645px;top:566.00px;font-size:20.5px;color:#111;font-weight:normal;letter-spacing:0.0px;font-style:normal;transform:scaleX(1.1347);transform-origin:0 0;z-index:3;">Screen Name</div>
<svg style="position:absolute;left:1815.3px;top:560.2px;z-index:3;" width="27" height="27" viewBox="0 0 27 27"><circle cx="13.5" cy="13.5" r="12.6" fill="#6f6f6f"/><path d="M13.5 6.3 V20.7 M6.3 13.5 H20.7" stroke="#fff" stroke-width="3.8" stroke-linecap="round"/></svg>
<div style="position:absolute;left:1443.5px;top:591.5px;width:203px;height:49px;background:#fff;border:1px solid #dcdcdc;border-radius:5px;box-sizing:border-box;z-index:3;"></div>
<div class="t" style="left:1457.4089552238806px;top:607.00px;font-size:19.5px;color:#333;font-weight:normal;letter-spacing:0.0px;font-style:normal;transform:scaleX(0.9955);transform-origin:0 0;z-index:3;">Execute Javasc</div>
<svg style="position:absolute;left:1612px;top:603px;z-index:3;" width="28" height="26" viewBox="0 0 28 26"><path d="M16.1 2.7 L25.5 12 Q26.5 13.2 25.5 14.3 L18.5 21 H24.6 Q26 21 26 22.45 Q26 23.9 24.6 23.9 H9 Q7.8 23.9 7 23.1 L2.5 18.2 Q1.5 17 2.5 15.9 L14.9 2.7 Q15.5 2.1 16.1 2.7Z" fill="#0d6a8a"/><path d="M5.6 16.6 L11.1 11.1 L17.4 17.6 L15.2 20 H8.6Z" fill="#fff"/></svg>
<div style="position:absolute;left:1662.5px;top:591.5px;width:203px;height:49px;background:#fff;border:1px solid #dcdcdc;border-radius:5px;box-sizing:border-box;z-index:3;"></div>
<div class="t" style="left:1677.4924369747898px;top:607.00px;font-size:19.5px;color:#7a7a7a;font-weight:normal;letter-spacing:0.0px;font-style:normal;transform:scaleX(1.0076);transform-origin:0 0;z-index:3;">Select Screen</div>
<div class="t" style="left:1442.0358974358974px;top:661.00px;font-size:21px;color:#111;font-weight:normal;letter-spacing:0.0px;font-style:normal;transform:scaleX(1.0821);transform-origin:0 0;z-index:3;">Element Key</div>
<div style="position:absolute;left:1443.5px;top:687px;width:415px;height:49.5px;background:#fff;border:1px solid #dcdcdc;border-radius:5px;box-sizing:border-box;z-index:3;"></div>
<div class="t" style="left:1459.9px;top:703.00px;font-size:20px;color:#333;font-weight:normal;letter-spacing:0.0px;font-style:normal;transform:scaleX(1.0379);transform-origin:0 0;z-index:3;">VariableName</div>
<svg style="position:absolute;left:1817.6px;top:697.5px;z-index:3;" width="28" height="26" viewBox="0 0 28 26"><path d="M16.1 2.7 L25.5 12 Q26.5 13.2 25.5 14.3 L18.5 21 H24.6 Q26 21 26 22.45 Q26 23.9 24.6 23.9 H9 Q7.8 23.9 7 23.1 L2.5 18.2 Q1.5 17 2.5 15.9 L14.9 2.7 Q15.5 2.1 16.1 2.7Z" fill="#0d6a8a"/><path d="M5.6 16.6 L11.1 11.1 L17.4 17.6 L15.2 20 H8.6Z" fill="#fff"/></svg>
<div style="position:absolute;left:1443.5px;top:759.5px;width:378px;height:55px;background:#e0e0e0;border-radius:28px;border:1px solid #d2d2d2;box-sizing:border-box;z-index:3;"></div>
<div style="position:absolute;left:1443.5px;top:759.5px;width:160px;height:55px;background:#fbb813;border-radius:28px 0 0 28px;z-index:3;"></div>
<div class="t" style="left:1460.7132075471698px;top:776.00px;font-size:21px;color:#111;font-weight:normal;letter-spacing:0.0px;font-style:normal;transform:scaleX(1.1434);transform-origin:0 0;z-index:3;">Parameters</div>
<div class="t" style="left:1619.95125px;top:776.00px;font-size:21px;color:#111;font-weight:normal;letter-spacing:0.0px;font-style:normal;transform:scaleX(1.1244);transform-origin:0 0;z-index:3;">Parameters Form</div>
<div class="t" style="left:1441.9188679245283px;top:835.00px;font-size:21px;color:#111;font-weight:normal;letter-spacing:0.0px;font-style:normal;transform:scaleX(1.1406);transform-origin:0 0;z-index:3;">Parameters</div>
<div style="position:absolute;left:1443.5px;top:862px;width:419.5px;height:120px;background:#fff;border:1px solid #d0d0d0;border-radius:6px;box-sizing:border-box;z-index:3;"></div>
<div class="t" style="left:1460.4472222222223px;top:872.00px;font-size:19.5px;color:#333;font-weight:normal;letter-spacing:0.0px;font-style:normal;transform:scaleX(1.0472);transform-origin:0 0;z-index:3;">jsname=SubstringScript2,function=substri</div>
<div class="t" style="left:1458.4112903225807px;top:900.00px;font-size:19.5px;color:#333;font-weight:normal;letter-spacing:0.0px;font-style:normal;transform:scaleX(0.9887);transform-origin:0 0;z-index:3;">ng,args=15,20</div>
<svg style="position:absolute;left:1848px;top:965px;z-index:3;" width="14" height="14" viewBox="0 0 14 14"><path d="M2 12.5 L12.5 2 M7 12.5 L12.5 7" stroke="#444" stroke-width="1.4"/></svg>
<div style="position:absolute;left:1532px;top:995px;width:151px;height:50px;background:#002e62;border:3px solid;border-color:#585858 #050505 #050505 #585858;box-sizing:border-box;z-index:3;"></div>
<div class="t" style="left:1563.9733333333331px;top:1010.00px;font-size:25px;color:#fff;font-weight:normal;letter-spacing:0.0px;font-style:normal;transform:scaleX(1.1267);transform-origin:0 0;z-index:3;">Cancel</div>
<div style="position:absolute;left:1697px;top:995px;width:151px;height:50px;background:#3cb449;border:3px solid;border-color:#45bd52 #1d5e26 #1d5e26 #45bd52;box-sizing:border-box;z-index:3;"></div>
<div class="t" style="left:1742.2436363636364px;top:1010.00px;font-size:25px;color:#fff;font-weight:normal;letter-spacing:0.0px;font-style:normal;transform:scaleX(1.0564);transform-origin:0 0;z-index:3;">Save</div>
</body></html>
